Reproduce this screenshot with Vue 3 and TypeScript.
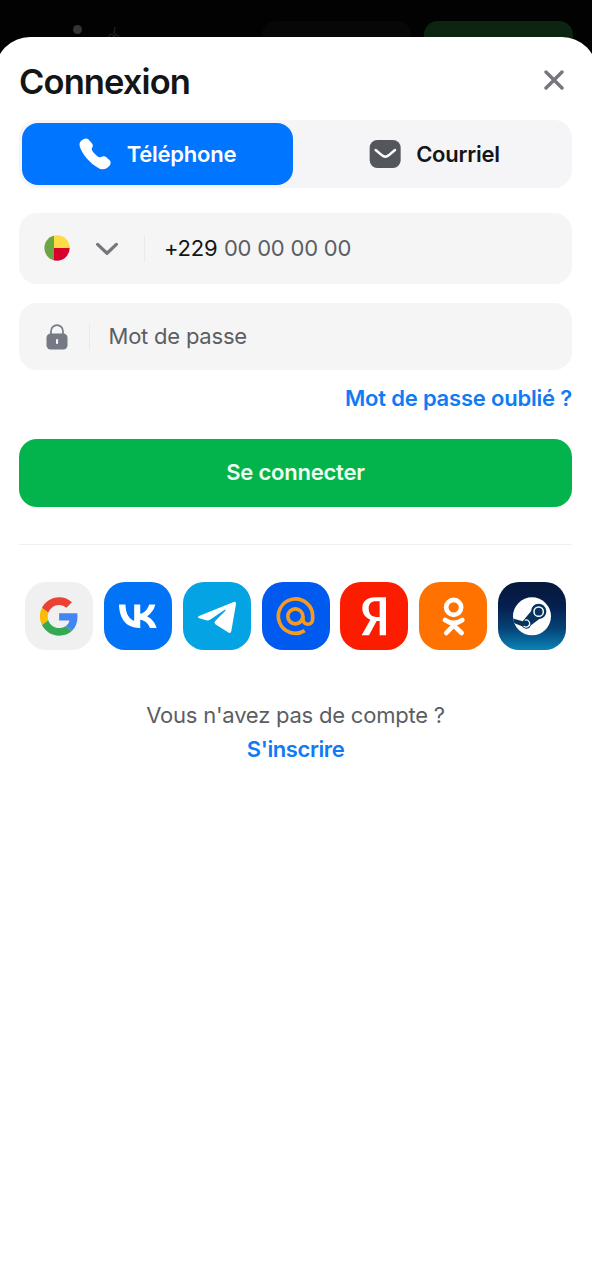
<script setup lang="ts">
import { ref } from 'vue'

type Method = 'phone' | 'email'
const method = ref<Method>('phone')
const phone = ref('')
const password = ref('')
</script>

<template>
  <div class="screen">
    <header class="backdrop">
      <span class="dot"></span>
      <svg class="flame" width="12" height="12" viewBox="0 0 12 12"><path d="M7 0 6 6 8 8M1 10C2 6 5 7 6 10c1-3 4-3 5 0" /></svg>
      <span class="ghost dark"></span>
      <span class="ghost green"></span>
    </header>

    <main class="sheet">
      <div class="head">
        <h1>Connexion</h1>
        <button class="close" aria-label="Fermer">
          <svg width="20" height="20" viewBox="0 0 20 20"><path d="M2 2 18 18M18 2 2 18" /></svg>
        </button>
      </div>

      <div class="tabs">
        <button class="tab" :class="{ active: method === 'phone' }" @click="method = 'phone'">
          <svg width="32" height="32" viewBox="0 0 96 96">
            <path fill="#fff" d="M6 9C12 3 22-1 28 4L38 15C43 21 42 25 39 30C37 34 39 38 44 44L52 52C57 57 61 59 66 57C72 54 77 53 82 58L92 67C97 72 95 80 90 85C81 95 68 96 57 89C39 80 18 59 7 37C1 25-1 16 6 9Z" />
          </svg>
          <span>Téléphone</span>
        </button>
        <button class="tab" :class="{ active: method === 'email' }" @click="method = 'email'">
          <svg width="32" height="32" viewBox="0 0 96 96">
            <rect x="2" y="6" width="93" height="84" rx="23" fill="#53565d" />
            <path d="M20 36 39 52Q49 60 59 52L78 36" fill="none" stroke="#fff" stroke-width="7.5" stroke-linecap="round" />
          </svg>
          <span>Courriel</span>
        </button>
      </div>

      <label class="field phone">
        <svg class="flag" width="26" height="26" viewBox="0 0 26 26">
          <clipPath id="round"><circle cx="13" cy="13" r="12.7" /></clipPath>
          <g clip-path="url(#round)">
            <path fill="#6ba544" d="M0 0h10v26H0z" />
            <path fill="#ffdb44" d="M10 0h16v13H10z" />
            <path fill="#d8002c" d="M10 13h16v13H10z" />
          </g>
        </svg>
        <svg class="chevron" width="24" height="16" viewBox="0 0 24 16"><path d="M2.6 3.4 12 12.3 21.4 3.4" /></svg>
        <i class="rule"></i>
        <span class="code">+229</span>
        <input v-model="phone" type="tel" placeholder="00 00 00 00" />
      </label>

      <label class="field secret">
        <svg class="lock" width="22" height="26" viewBox="0 0 22 26">
          <path d="M5 11V7.2a6 6 0 0 1 12 0V11" fill="none" stroke="#757984" stroke-width="1.7" />
          <rect x=".5" y="9.4" width="21" height="16.2" rx="4.2" fill="#757984" />
          <rect x="10" y="15" width="2.1" height="5" rx=".8" fill="#f5f5f5" />
        </svg>
        <i class="rule"></i>
        <input v-model="password" type="password" placeholder="Mot de passe" />
      </label>

      <a class="forgot">Mot de passe oublié ?</a>
      <button class="submit">Se connecter</button>

      <div class="divider"></div>

      <nav class="socials">
        <button class="tile google" aria-label="Google">
          <svg viewBox="0 0 68 68"><g transform="translate(14.9 15.3) scale(.8)">
            <path fill="#ea4335" d="M24 9.5c3.54 0 6.71 1.22 9.21 3.6l6.85-6.85C35.9 2.38 30.47 0 24 0 14.62 0 6.51 5.38 2.56 13.22l7.98 6.19C12.43 13.72 17.74 9.5 24 9.5z" />
            <path fill="#4285f4" d="M46.98 24.55c0-1.57-.15-3.09-.38-4.55H24v9.02h12.94c-.58 2.96-2.26 5.48-4.78 7.18l7.73 6c4.51-4.18 7.09-10.36 7.09-17.65z" />
            <path fill="#fbbc05" d="M10.53 28.59c-.48-1.45-.76-2.99-.76-4.59s.27-3.14.76-4.59l-7.98-6.19C.92 16.46 0 20.12 0 24c0 3.88.92 7.54 2.56 10.78l7.97-6.19z" />
            <path fill="#34a853" d="M24 48c6.48 0 11.93-2.13 15.89-5.81l-7.73-6c-2.15 1.45-4.92 2.3-8.16 2.3-6.26 0-11.57-4.22-13.47-9.91l-7.98 6.19C6.51 42.62 14.62 48 24 48z" />
          </g></svg>
        </button>
        <button class="tile vk" aria-label="VK">
          <svg viewBox="0 0 68 68"><path transform="translate(5.5 5.4) scale(1.175)" fill="#fff" d="M25.54 34.58c-10.94 0-17.18-7.5-17.44-19.98h5.48c.18 9.16 4.22 13.04 7.42 13.84V14.6h5.16v7.9c3.16-.34 6.48-3.94 7.6-7.9h5.16c-.86 4.88-4.46 8.48-7.02 9.96 2.56 1.2 6.66 4.34 8.22 10.02h-5.68c-1.22-3.8-4.26-6.74-8.28-7.14v7.14h-.62z" /></svg>
        </button>
        <button class="tile telegram" aria-label="Telegram">
          <svg viewBox="0 0 68 68"><path transform="translate(-8 -12) scale(.33333)" fill="#fff" d="M72 138 176 96Q184 93 183 102L169 183Q167 192 159 187L121 163Q116 159 120 154L151 122Q154 117 148 120L105 149Q99 153 91 150L73 145Q65 142 72 138Z" /></svg>
        </button>
        <button class="tile mail" aria-label="Mail.ru">
          <svg viewBox="0 0 68 68"><g transform="translate(-87 -12) scale(.33333)" fill="none" stroke="#f69b1d" stroke-width="11">
            <path d="M389 182A51.5 51.5 0 1 1 413 139V147C413 168 384 168 384 147V139" />
            <circle cx="361" cy="139" r="22.5" />
          </g></svg>
        </button>
        <button class="tile yandex" aria-label="Yandex">
          <svg viewBox="0 0 68 68"><path transform="translate(-10 -12) scale(.33333)" fill="#fff" fill-rule="evenodd" d="M168 82V196H149V153H140L117 196H95L121 149C106 143 97 131 97 115C97 94 111 82 136 82ZM149 94H137C124 94 116 102 116 115C116 132 125 141 139 141H149Z" /></svg>
        </button>
        <button class="tile ok" aria-label="Odnoklassniki">
          <svg viewBox="0 0 68 68"><g transform="translate(-89 -12) scale(.33333)" fill="none" stroke="#fff" stroke-width="14" stroke-linecap="round" stroke-linejoin="round">
            <circle cx="371" cy="112" r="22.5" />
            <path d="M345 150Q371 168 397 150M371 163V166L349 189M371 166 395 189" />
          </g></svg>
        </button>
        <button class="tile steam" aria-label="Steam">
          <svg viewBox="0 0 68 68"><g transform="translate(-18 -12) scale(.33333)">
            <clipPath id="disc"><circle cx="156" cy="139" r="57" /></clipPath>
            <circle cx="156" cy="139" r="57" fill="#fff" />
            <g clip-path="url(#disc)">
              <path fill="#06345f" d="M90 143 128 154 153 124A23 23 0 1 1 178 147L153 166A15 15 0 0 1 126 169L90 154Z" />
            </g>
            <circle cx="176" cy="125" r="14" fill="none" stroke="#fff" stroke-width="4.5" />
            <path d="M134 151A10.5 10.5 0 1 1 131 168" fill="none" stroke="#fff" stroke-width="3.5" />
          </g></svg>
        </button>
      </nav>

      <p class="signup">Vous n'avez pas de compte ?<a>S'inscrire</a></p>
    </main>
  </div>
</template>

<style>
body { margin: 0; background: #fff; }
</style>

<style scoped>
.screen {
  position: relative;
  height: 1280px;
  overflow: hidden;
  background: #fff;
  font-family: Inter, "Liberation Sans", sans-serif;
  font-size: 22px;
  letter-spacing: -.22px;
  color: #141516;
}
.backdrop { position: absolute; inset: 0 0 auto; height: 70px; background: #020202; }
.dot { position: absolute; left: 72.5px; top: 25px; width: 9px; height: 9px; border-radius: 50%; background: #343434; }
.flame { position: absolute; left: 108px; top: 27px; fill: none; stroke: #1c1e1c; stroke-width: 1.5; }
.ghost { position: absolute; top: 21px; height: 48px; width: 149px; border-radius: 14px; }
.ghost.dark { left: 262px; background: #070707; }
.ghost.green { left: 424px; background: #0b2512; }
.sheet {
  position: relative;
  box-sizing: border-box;
  height: 1260px;
  margin: 36.5px -5px 0;
  padding: 0 25px 0 24px;
  border-radius: 35px 35px 0 0;
  background: #fff;
}
button { padding: 0; border: 0; font: inherit; letter-spacing: inherit; color: inherit; background: none; }
.head { display: flex; justify-content: space-between; align-items: center; height: 83.5px; padding: 3px 8.5px 0 0; box-sizing: border-box; }
h1 { margin: 5px 0 0; font-size: 34.5px; line-height: 42px; font-weight: 600; letter-spacing: -.9px; }
.close { display: flex; }
.close path { fill: none; stroke: #74777c; stroke-width: 3.4; stroke-linecap: round; }
.tabs { display: flex; gap: 5px; box-sizing: border-box; height: 68px; padding: 3px; border-radius: 18px; background: #f5f5f7; }
.tab {
  flex: 1;
  display: flex;
  align-items: center;
  justify-content: center;
  gap: 15.5px;
  padding-left: 2px;
  border-radius: 16px;
  font-weight: 600;
}
.tab.active { padding-left: 1px; background: #0075ff; color: #fff; }
.field {
  display: flex;
  align-items: center;
  box-sizing: border-box;
  padding: 0 25px;
  border-radius: 18px;
  background: #f5f5f5;
}
.phone { height: 71px; margin-top: 25px; }
.secret { height: 67px; margin-top: 19px; padding-left: 27px; }
.flag { position: relative; top: -.5px; }
.chevron { margin-left: 25px; }
.chevron path { fill: none; stroke: #74777c; stroke-width: 3.3; stroke-linecap: round; stroke-linejoin: round; }
.rule { width: 1px; height: 26px; background: #e9e9ea; }
.phone .rule { margin: 0 19px 0 25px; }
.secret .rule { margin: 0 18.5px 0 21px; }
.code { padding-bottom: 1px; }
input { flex: 1; min-width: 0; padding: 0 0 1px; border: 0; outline: 0; font: inherit; letter-spacing: -.22px; color: inherit; background: none; }
.phone input { margin-left: 6.5px; }
input::placeholder { color: #5b5e63; opacity: 1; }
.forgot { display: block; margin-top: 14px; text-align: right; line-height: 28px; font-weight: 600; letter-spacing: -.2px; color: #107bf2; }
.submit { display: block; width: 100%; height: 68px; margin-top: 26.5px; padding-bottom: 2px; border-radius: 18px; background: #03b34b; color: #effff2; font-weight: 600; }
.divider { height: 1px; margin-top: 37.5px; background: #f0f0f1; }
.socials { display: flex; justify-content: center; gap: 10.8px; margin-top: 37px; }
.tile { width: 68px; height: 68px; border-radius: 21px; overflow: hidden; }
.tile svg { display: block; width: 68px; height: 68px; }
.google { background: #f0f0f0; }
.vk { background: #0073f7; }
.telegram { background: #04a3e3; }
.mail { background: #005af0; }
.yandex { background: #fc1d00; }
.ok { background: #ff7200; }
.steam { background: linear-gradient(#06173a, #052050 38%, #064276 68%, #0a83b5); }
.signup { margin: 48px 0 0; text-align: center; line-height: 34px; color: #5b5e63; }
.signup a { display: block; font-weight: 600; letter-spacing: -.4px; color: #107bf2; }
</style>
